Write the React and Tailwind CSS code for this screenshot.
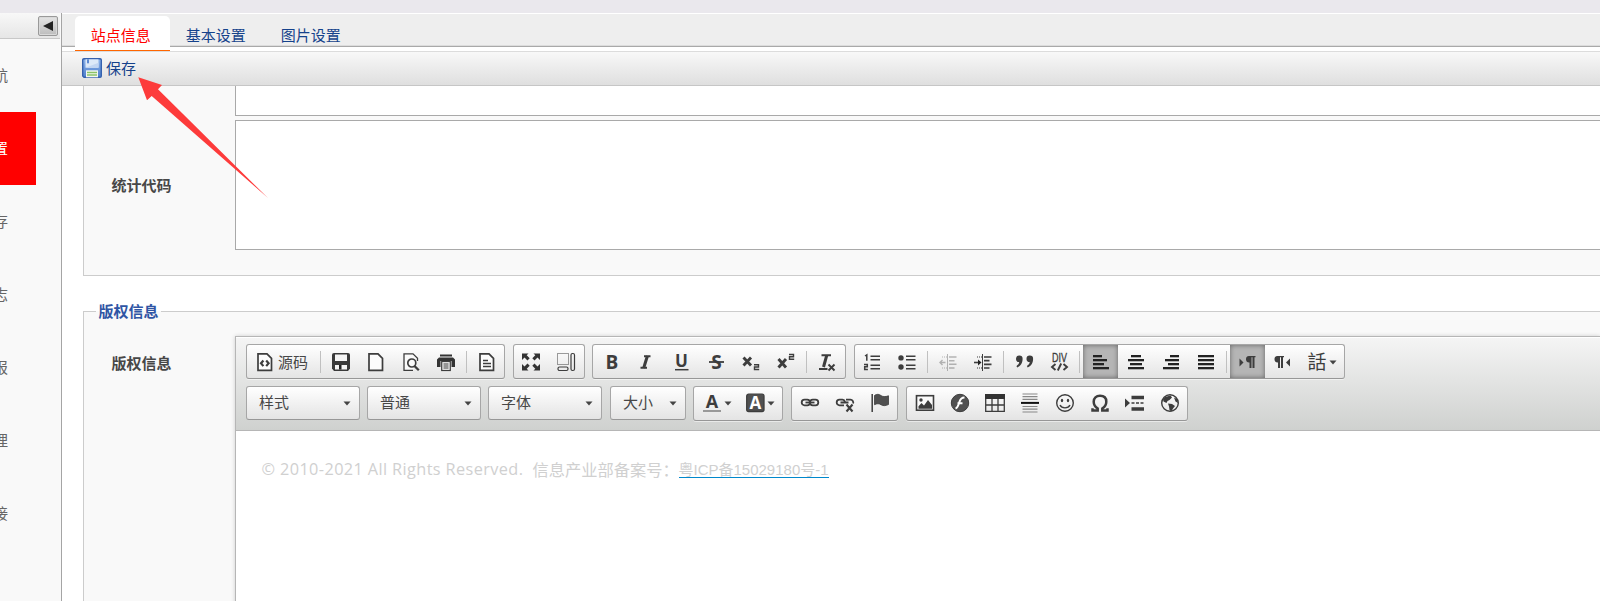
import React from "react";

const INK = "#3d3d3d";

function Icon({ children, dim }) {
  return (
    <svg width="20" height="20" viewBox="0 0 20 20" fill="none" stroke={INK} className={dim ? "shrink-0 opacity-35" : "shrink-0"}>
      {children}
    </svg>
  );
}

function Page({ children }) {
  return (
    <Icon>
      <path d="M3 1.8h9l4.5 4.5v12H3z" fill="#fcfcfc" strokeWidth="1.7" />
      {children}
    </Icon>
  );
}

function Glyph({ x = 10, y = 17, size = 19, family = "Open Sans", style, weight = 700, children, ...rest }) {
  return (
    <text x={x} y={y} fontSize={size} fontFamily={family} fontStyle={style} fontWeight={weight} textAnchor="middle" fill={INK} stroke="none" {...rest}>
      {children}
    </text>
  );
}

function Bars({ rows }) {
  return (
    <Icon>
      {rows.map(([x, w], i) => (
        <rect key={i} x={x} y={3 + i * 4} width={w} height="2.3" fill="#222" stroke="none" />
      ))}
    </Icon>
  );
}

const icons = {
  source: (
    <Page>
      <path d="M8.4 8.5L6 11.3l2.400 2.800M11.200 8.500l2.400 2.800-2.400 2.800" strokeWidth="2.200" />
    </Page>
  ),
  save: (
    <Icon>
      <path d="M3 1h14a2 2 0 0 1 2 2v13.500L17 19H3l-2-2.500V3a2 2 0 0 1 2-2z" fill="#3a3a3a" stroke="none" />
      <rect x="4" y="2.500" width="12" height="6.500" fill="#f5f5f5" stroke="none" />
      <rect x="4" y="13" width="12" height="4.500" fill="#f5f5f5" stroke="none" />
      <rect x="8" y="13" width="2.500" height="4.500" fill="#222" stroke="none" />
    </Icon>
  ),
  newPage: <Page />,
  preview: (
    <Icon>
      <path d="M16.500 9V6.300L12 1.800H3v16.500h9" strokeWidth="1.300" fill="#fafafa" />
      <circle cx="10.800" cy="11" r="4" strokeWidth="1.700" fill="#fafafa" />
      <path d="M13.500 14l4.300 4.300" strokeWidth="2.300" />
    </Icon>
  ),
  print: (
    <Icon>
      <path d="M4 2.500h12v2H4zM3 5.500h14l2 2V15h-3.500V9h-11v6H1V7.500z" fill="#333" stroke="none" />
      <rect x="5.700" y="9.500" width="8.600" height="9" fill="#eee" strokeWidth="1.200" />
      <path d="M7.500 12h5M7.500 14h5M7.500 16h5" strokeWidth="1" />
    </Icon>
  ),
  template: (
    <Page>
      <path d="M6 8.500h5M6 11.500h8M6 14.500h8" strokeWidth="1.500" />
    </Page>
  ),
  maximize: (
    <Icon>
      <path d="M1 1.500h6.500L5.700 3.300l3 3-2.200 2.200-3-3L1 8zM19 1.500h-6.500l1.800 1.800-3 3 2.200 2.200 3-3L19 8zM1 18.500h6.500l-1.800-1.800 3-3-2.200-2.200-3 3L1 12zM19 18.500h-6.500l1.800-1.800-3-3 2.200-2.200 3 3L19 12z" fill="#333" stroke="none" />
    </Icon>
  ),
  blocks: (
    <Icon>
      <path d="M1.500 1.500h11v11h-11z" strokeDasharray="1 1" />
      <rect x="15" y="1.500" width="3.500" height="17" rx="1.500" strokeWidth="1.200" />
      <rect x="2" y="15" width="10" height="3.500" rx="1.500" strokeWidth="1.200" />
    </Icon>
  ),
  bold: <Icon><Glyph x={11} y={17}>B</Glyph></Icon>,
  italic: (
    <Icon>
      <path d="M8 4.200h6.500M4.500 15.800H11" strokeWidth="2" />
      <path d="M11.400 4L7.700 16" strokeWidth="3" />
    </Icon>
  ),
  underline: (
    <Icon>
      <Glyph x={10.500} y={15} size={17}>U</Glyph>
      <path d="M4 17.700h13.500" strokeWidth="1.500" />
    </Icon>
  ),
  strike: (
    <Icon>
      <Glyph x={10.500} y={17} size={19}>S</Glyph>
      <path d="M3 10h15" strokeWidth="1.800" />
    </Icon>
  ),
  sub: (
    <Icon>
      <path d="M2.500 5.500l7.500 8M10 5.500l-7.500 8" strokeWidth="2.900" />
      <path d="M13 12.800h4.500v2.200H13.500v2.500h4.700" strokeWidth="1.400" />
    </Icon>
  ),
  sup: (
    <Icon>
      <path d="M2.500 7l7.500 8.500M10 7l-7.500 8.500" strokeWidth="2.900" />
      <path d="M13 2.500h4.500v2.200H13.500v2.500h4.700" strokeWidth="1.400" />
    </Icon>
  ),
  clear: (
    <Icon>
      <path d="M4.500 3.200H14M2 17h8.500" strokeWidth="2" />
      <path d="M9.700 3.500L6.500 15" strokeWidth="3" />
      <path d="M11.500 12.500l6 6M17.500 12.500l-6 6" strokeWidth="1.900" />
    </Icon>
  ),
  numbered: (
    <Icon>
      <path d="M3 4l1.800-1.200v6M2 12.500h3.300v2.300H2.700v2.700h3.200" strokeWidth="1.500" />
      <path d="M8.500 4.200H18M8.500 7.700H18M8.500 13.200H18M8.500 16.700H18" strokeWidth="1.600" />
    </Icon>
  ),
  bullets: (
    <Icon>
      <circle cx="4" cy="5.900" r="2.700" fill={INK} stroke="none" />
      <circle cx="4" cy="15" r="2.700" fill={INK} stroke="none" />
      <path d="M9 4.200h9.500M9 7.700h9.500M9 13.200h9.500M9 16.700h9.500" strokeWidth="1.600" />
    </Icon>
  ),
  outdent: (
    <Icon dim>
      <path d="M2 10.500h5.500M4.500 8L2 10.500 4.500 13" strokeWidth="1.400" />
      <path d="M9.500 2v17" />
      <path d="M4 5h5M4 16h5" strokeDasharray="1 1" />
      <path d="M11 5h7.500M11 8.700h5.500M11 12.300h7.500M11 16h5.500" strokeWidth="1.500" />
    </Icon>
  ),
  indent: (
    <Icon>
      <path d="M1 10.500h5" strokeWidth="1.600" />
      <path d="M5 7.500l3.500 3L5 13.500z" fill="#222" stroke="none" />
      <path d="M9.500 2v17" />
      <path d="M4 5h5M4 16h5" strokeDasharray="1 1" />
      <path d="M11 5h7.500M11 8.700h5.500M11 12.300h7.500M11 16h5.500" strokeWidth="1.700" />
    </Icon>
  ),
  quote: (
    <Icon>
      <path d="M2 6.800a3.200 3.200 0 0 1 6.600 0c0 4-1.600 7-5.400 8.600L2.400 14c1.800-1 2.600-2.300 2.800-3.900A3.200 3.200 0 0 1 2 6.800zM12.500 6.800a3.200 3.200 0 0 1 6.600 0c0 4-1.600 7-5.400 8.600l-.8-1.400c1.800-1 2.600-2.300 2.800-3.900A3.200 3.200 0 0 1 12.500 6.800z" fill={INK} stroke="none" />
    </Icon>
  ),
  div: (
    <Icon>
      <Glyph x={10.500} y={9.500} size={12} family="Liberation Sans" weight={400} textLength={15} lengthAdjust="spacingAndGlyphs" stroke={INK} strokeWidth=".3">DIV</Glyph>
      <path d="M6.500 12L3 15l3.500 3M14.500 12l3.500 3-3.500 3M12.200 11.500L8.800 18.500" strokeWidth="1.900" />
    </Icon>
  ),
  left: <Bars rows={[[2, 9], [2, 14], [2, 11], [2, 16]]} />,
  center: <Bars rows={[[5, 10], [2, 16], [4, 12], [2, 16]]} />,
  right: <Bars rows={[[9, 9], [4, 14], [7, 11], [2, 16]]} />,
  justify: <Bars rows={[[2, 16], [2, 16], [2, 16], [2, 16]]} />,
  ltr: (
    <Icon>
      <path d="M2.500 6.500l4 4-4 4z" fill={INK} stroke="none" />
      <path d="M12 4h6.500v1.300h-1V16h-2V5.300h-1V16h-2v-5.500A3.200 3.200 0 0 1 12 4z" fill={INK} stroke="none" />
    </Icon>
  ),
  rtl: (
    <Icon>
      <path d="M18 6.500l-4 4 4 4z" fill={INK} stroke="none" />
      <path d="M5.500 4H12v1.300h-1V16H9V5.300H8V16H6v-5.500A3.200 3.200 0 0 1 5.500 4z" fill={INK} stroke="none" />
    </Icon>
  ),
  language: <Icon><Glyph y={17} size={19} family="Noto Sans CJK TC" weight={400}>話</Glyph></Icon>,
  color: (
    <Icon>
      <Glyph y={14.500} size={18}>A</Glyph>
      <rect x="1" y="17" width="18" height="2" fill="#999" stroke="none" />
    </Icon>
  ),
  bgColor: (
    <Icon>
      <rect x="1.700" y="1.200" width="17.300" height="17.300" rx="2" fill="#505050" strokeWidth="1.300" />
      <Glyph x={10.300} y={16} size={17} fill="#fff">A</Glyph>
    </Icon>
  ),
  link: (
    <Icon>
      <rect x="1.700" y="6.700" width="8.300" height="5.600" rx="2.800" strokeWidth="1.800" />
      <rect x="10" y="6.700" width="8.300" height="5.600" rx="2.800" strokeWidth="1.800" />
      <path d="M5.500 9.500h9" strokeWidth="1.800" />
    </Icon>
  ),
  unlink: (
    <Icon>
      <path d="M9 12.300H4.500a2.800 2.800 0 0 1 0-5.600h3a2.800 2.800 0 0 1 2.500 2M11 6.700h4.500a2.800 2.800 0 0 1 2.600 3.800M5.500 9.500h8" strokeWidth="1.800" />
      <path d="M11.500 11.500l6 7M17.500 11.500l-6 7" strokeWidth="2.100" />
    </Icon>
  ),
  anchor: (
    <Icon>
      <path d="M2.200 1v18" strokeWidth="1.500" />
      <path d="M4.500 2.500c3-2 5-1 6.500.1s4.500 1.400 7.500.2v8.700c-3 1.500-5.500 1.500-7.500.2s-4-1.300-6.500 0z" fill="#505050" stroke={INK} strokeWidth=".8" />
    </Icon>
  ),
  image: (
    <Icon>
      <rect x="1.500" y="2.700" width="17" height="14.500" strokeWidth="1.600" fill="#fafafa" />
      <circle cx="6" cy="7" r="1.700" fill={INK} stroke="none" />
      <path d="M3.500 15.700v-2.500L6.500 10l2.500 2.500L13 7l4 5v3.700z" fill={INK} stroke="none" />
    </Icon>
  ),
  flash: (
    <Icon>
      <circle cx="10" cy="10" r="8.700" fill="#505050" strokeWidth="1" />
      <path d="M14.500 4.500c-3.500 0-4.500 2-5.300 5S7.500 15 5.500 15.500M7.500 10.300h5" stroke="#fff" strokeWidth="2" />
    </Icon>
  ),
  table: (
    <Icon>
      <rect x="0" y="1" width="20" height="5" fill="#333" stroke="none" />
      <path d="M.7 6v12.300h18.600V6M7 6v12M13 6v12M.7 12h18.600" strokeWidth="1.300" />
    </Icon>
  ),
  rule: (
    <Icon>
      <path d="M2.500 1h15M2.500 3.700h15M2.500 6.300h15M2.500 13.500h15M2.500 16.200h15M2.500 19h15" stroke="#888" strokeWidth="1.200" />
      <path d="M1 9.900h18" stroke="#111" strokeWidth="2" />
    </Icon>
  ),
  smiley: (
    <Icon>
      <circle cx="10" cy="10" r="8.300" strokeWidth="1.400" />
      <ellipse cx="7" cy="7.500" rx="1.200" ry="1.700" fill={INK} stroke="none" />
      <ellipse cx="13" cy="7.500" rx="1.200" ry="1.700" fill={INK} stroke="none" />
      <path d="M5 12c1.800 3.800 8.200 3.800 10 0" strokeWidth="1.400" />
    </Icon>
  ),
  omega: (
    <Icon>
      <path d="M2.500 15.300v2.200h5.200v-2C4.800 13.500 3.700 11.300 3.700 8.700 3.700 5 6.200 2.800 10 2.800s6.300 2.200 6.300 5.900c0 2.600-1.100 4.800-4 6.800v2h5.200v-2.200" strokeWidth="2.500" />
    </Icon>
  ),
  pageBreak: (
    <Icon>
      <path d="M0 5.500l5 4.500-5 4.500z" fill={INK} stroke="none" />
      <path d="M6.500 4.500H19M6.500 16H19" strokeWidth="3.600" />
      <path d="M6.500 10H19" strokeWidth="1.300" strokeDasharray="3 1.500" />
    </Icon>
  ),
  globe: (
    <Icon>
      <circle cx="10" cy="10" r="8.300" strokeWidth="1.400" />
      <path d="M5 4l5.500-1.500L12 4.500 9.500 7 7.500 8l-1 2-3-1.500-.5-2zM8 10.500l4 .5 3 2-2 2.500-1.500 3-2-1.500-.5-3.500zM14 4.500L17 6l1 4-2.500-1.500z" fill={INK} stroke="none" />
    </Icon>
  ),
};

function Caret() {
  return (
    <svg width="8" height="5" viewBox="0 0 8 5" className="shrink-0">
      <path d="M.5.500h7L4 4.500z" fill="#444" />
    </svg>
  );
}

function Group({ children }) {
  return (
    <div className="flex h-[35px] shrink-0 rounded-[3px] border border-[#a6a6a6] border-b-[#979797] bg-linear-to-b from-white to-[#e4e4e4] shadow-[0_1px_0_rgba(255,255,255,0.5)]">
      {children}
    </div>
  );
}

function Button({ name, active, wide }) {
  return (
    <div className={`flex items-center justify-center ${wide ? "w-[35.1px] pb-px pl-px" : "w-[35px] pt-px"} ${active ? "bg-[#b5b5b5] shadow-[inset_0_0_5px_rgba(0,0,0,0.45)]" : ""}`}>
      {icons[name]}
    </div>
  );
}

function Separator() {
  return (
    <div className="flex w-[6px] items-center justify-center">
      <div className="h-[22px] w-px bg-[#c0c0c0]" />
    </div>
  );
}

function Combo({ label, small }) {
  return (
    <div className={`flex h-[34px] shrink-0 items-center justify-between rounded-[3px] border border-[#a6a6a6] border-b-[#979797] bg-linear-to-b from-white to-[#e4e4e4] pr-[8px] pb-[3px] pl-[12px] text-[15px] text-[#474747] ${small ? "w-[76px]" : "w-[114px]"}`}>
      <span>{label}</span>
      <span className="pt-[4px]"><Caret /></span>
    </div>
  );
}

function buttons(names, active, wide) {
  return names.map((n, i) => (n === "|" ? <Separator key={i} /> : <Button key={i} name={n} active={n === active} wide={wide} />));
}

function EditorToolbar() {
  return (
    <div className="flex h-[94px] flex-col gap-[7px] border-b border-[#b6b6b6] bg-linear-to-b from-[#f5f5f5] to-[#cfd1cf] pt-[7px] pl-[10px] shadow-[inset_0_1px_0_#fff]">
      <div className="flex gap-[7.5px]">
        <Group>
          <div className="flex w-[70px] items-center gap-[4px] pt-px pl-[8px] text-[15px] text-[#474747]">
            {icons.source}
            <span className="-ml-px whitespace-nowrap">源码</span>
          </div>
          {buttons(["|", "save", "newPage", "preview", "print", "|", "template"])}
        </Group>
        <Group>{buttons(["maximize", "blocks"])}</Group>
        <Group>{buttons(["bold", "italic", "underline", "strike", "sub", "sup", "|", "clear"])}<div className="w-px" /></Group>
        <Group>
          {buttons(["numbered", "bullets", "|", "outdent", "indent", "|", "quote", "div", "|"])}
          <div className="w-[0.5px]" />
          {buttons(["left", "center", "right", "justify", "|"], "left")}
          <div className="w-[0.5px]" />
          {buttons(["ltr", "rtl"], "ltr")}
          <div className="flex w-[44px] items-center gap-[2px] pt-px pl-[7px]">
            {icons.language}
            <Caret />
          </div>
        </Group>
      </div>
      <div className="flex gap-[7px]">
        <Combo label="样式" />
        <Combo label="普通" />
        <Combo label="字体" />
        <div className="pl-px"><Combo label="大小" small /></div>
        <Group>
          <div className="flex w-[44px] items-center gap-[2px] pb-px pl-[8px]">{icons.color}<Caret /></div>
          <div className="flex w-[44px] items-center gap-[2px] pb-px pl-[7px]">{icons.bgColor}<Caret /></div>
        </Group>
        <div className="flex gap-[7.5px] pl-[0.8px]">
          <Group>{buttons(["link", "unlink", "anchor"], null, true)}</Group>
          <Group>{buttons(["image", "flash", "table", "rule", "smiley", "omega", "pageBreak", "globe"], null, true)}</Group>
        </div>
      </div>
    </div>
  );
}

function Sidebar() {
  const items = ["航", "置", "存", "志", "报", "理", "接"];
  return (
    <aside className="flex w-[62px] shrink-0 flex-col border-r border-[#a5a5a5] bg-[#f9f9f9]">
      <div className="mr-px flex h-[26px] items-start justify-end border-b border-[#c8c8c8] bg-linear-to-b from-[#f8f8f8] to-[#e6e6e6] pt-[3px] pr-[2px]">
        <div className="flex size-[20px] items-center justify-center rounded-[2px] border border-[#999] bg-linear-to-b from-[#e4e4e4] to-[#bdbdbd] shadow-[inset_0_0_0_1px_#d9d9d9]">
          <svg width="10" height="10" viewBox="0 0 10 10"><path d="M10 0v10L0 5z" fill="#222" /></svg>
        </div>
      </div>
      <nav className="flex flex-col overflow-hidden text-[15px]">
        {items.map((label) => (
          <div key={label} className={label === "置" ? "flex h-[73px] w-[36px] items-center bg-[#ff0000] pb-px text-white" : "flex h-[73px] w-[36px] items-center pb-px text-[#666]"}>
            <span className="-ml-[7px]">{label}</span>
          </div>
        ))}
      </nav>
    </aside>
  );
}

function SaveIcon() {
  return (
    <svg width="20" height="20" viewBox="0 0 20 20">
      <defs>
        <linearGradient id="disk" x1="0" y1="0" x2="0" y2="1">
          <stop offset="0" stopColor="#8fb4ea" />
          <stop offset="1" stopColor="#4f80cd" />
        </linearGradient>
      </defs>
      <path d="M.7 2Q.7.700 2 .700h16q1.300 0 1.300 1.300v16q0 1.300-1.300 1.300H2L.7 18z" fill="url(#disk)" stroke="#3561ae" strokeWidth="1.400" />
      <rect x="3.500" y="1.300" width="13" height="8.400" fill="#dde9f8" />
      <path d="M3.500 9.700l13-5v5z" fill="#c3d6f2" />
      <rect x="5" y="1.300" width="2" height="4" fill="#5d8ad2" />
      <rect x="4" y="12.300" width="12" height="7" fill="#f3f8f0" />
      <path d="M5 14.500h10M5 17h10" stroke="#8ac267" strokeWidth="1.500" />
    </svg>
  );
}

export default function App() {
  return (
    <div className="relative flex h-[601px] w-[1600px] flex-col overflow-hidden bg-white font-['Noto_Sans_CJK_SC',sans-serif] text-[15px] leading-[22px]">
      <div className="h-[13px] shrink-0 bg-[#eae8ed]" />
      <div className="flex min-h-0 flex-1">
        <Sidebar />
        <main className="flex min-w-0 flex-1 flex-col">
          <div className="flex h-[34px] shrink-0 border-t border-b border-t-white border-b-[#a9a9a9] bg-[#eeeeee] pt-[2px] pl-[13px] text-[#15428b] shadow-[inset_0_-1px_0_#dcdcdc]">
            <div className="z-10 h-[35px] w-[95px] shrink-0 rounded-t-[5px] border-b border-[#ff6600] bg-white pt-[8px] pl-[15.8px] text-[#ff0000]">站点信息</div>
            <div className="w-[95px] pt-[8px] pl-[15.8px]">基本设置</div>
            <div className="w-[95px] pt-[8px] pl-[15.8px]">图片设置</div>
          </div>
          <div className="mt-[4px] flex h-[35px] shrink-0 items-center gap-[4px] border-t border-b border-t-[#dcdcdc] border-b-[#c6c6c6] bg-linear-to-b from-[#f8f8f8] to-[#dfdfdf] pb-px pl-[20px] text-[#15428b]">
            <SaveIcon />
            <span>保存</span>
          </div>
          <div className="flex min-h-0 flex-1 flex-col overflow-hidden pl-[21px]">
            <section className="flex h-[190px] shrink-0 border-b border-l border-[#cccccc] bg-[#f9f9f9]">
              <div className="w-[151px] shrink-0 pt-[88px] pl-[27.4px] font-bold text-[#474747]">统计代码</div>
              <div className="flex flex-1 flex-col gap-[4px]">
                <div className="h-[30px] border-b border-l border-[#a9a9a9] bg-white" />
                <div className="h-[130px] border-t border-b border-l border-[#a9a9a9] bg-white" />
              </div>
            </section>
            <fieldset className="mt-[24px] h-[400px] min-w-0 shrink-0 border-t border-l border-[#cccccc] bg-[#f9f9f9]">
              <legend className="ml-[12px] pr-[3px] pl-[2.4px] font-bold text-[#2f55a4]">版权信息</legend>
              <div className="flex h-[380px] pt-[14px]">
                <div className="w-[151px] shrink-0 pt-[16px] pl-[27.4px] font-bold text-[#474747]">版权信息</div>
                <div className="min-w-0 flex-1 border-t border-l border-[#b6b6b6] bg-white shadow-[0_0_4px_rgba(0,0,0,0.18)]">
                  <EditorToolbar />
                  <p className="flex items-center pt-[25px] pl-[25.5px] text-[16.25px] leading-[24px] whitespace-pre text-[#d0d0d0]">
                    <span className="w-[271px] pt-px font-['Open_Sans'] font-medium tracking-[0.4px]">© 2010-2021 All Rights Reserved.</span>
                    <span className="w-[146px]">信息产业部备案号：</span>
                    <span className="h-[19px] border-b border-[#0088cc] font-['Liberation_Sans','Noto_Sans_CJK_SC',sans-serif] text-[15px] leading-[21px]">粤ICP备15029180号-1</span>
                  </p>
                </div>
              </div>
            </fieldset>
          </div>
        </main>
      </div>
      <svg className="absolute top-[76px] left-[137px]" width="133" height="124" viewBox="137 76 133 124">
        <path d="M138.300 77.300L162 85l-4 4.300L268 198 151.700 96l-4.700 4.300z" fill="#fd3b3b" />
      </svg>
    </div>
  );
}
